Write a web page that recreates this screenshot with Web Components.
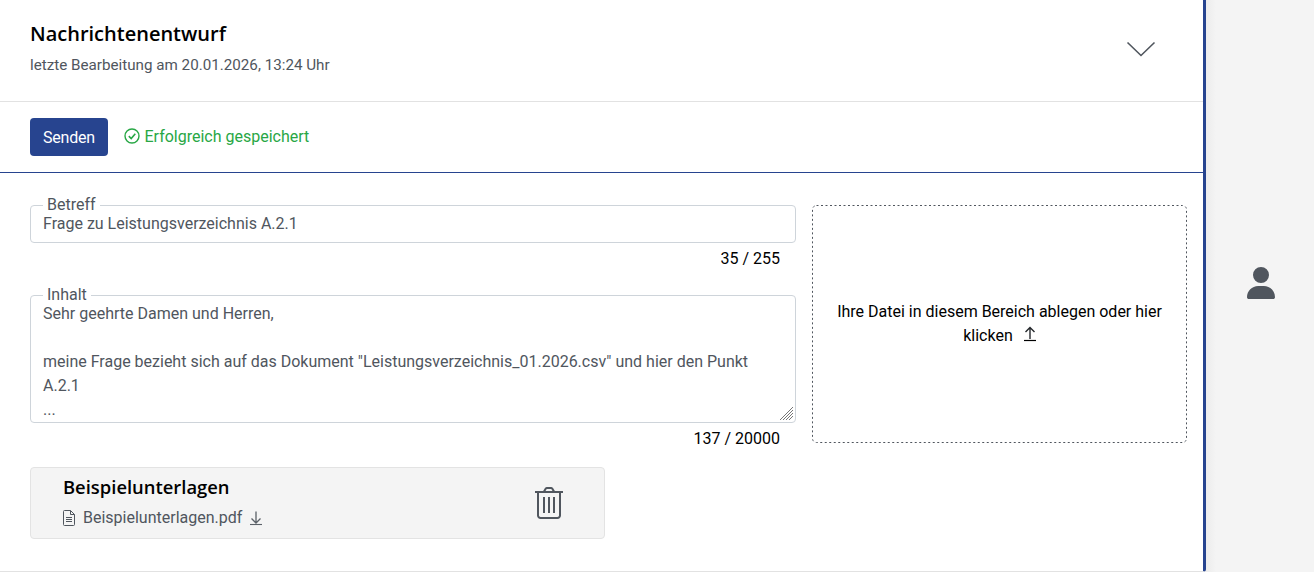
<!DOCTYPE html>
<html lang="de">
<head>
<meta charset="utf-8">
<title>Nachrichtenentwurf</title>
<style>
  html, body { margin: 0; height: 100%; background: #f4f4f4; overflow: hidden; }
  body { font-family: Roboto, "Liberation Sans", sans-serif; font-size: 16px; }
</style>
</head>
<body>
<draft-page></draft-page>

<script>
// kleine helper fuer die icons, alle als inline svg
const ICONS = {
  chevron: `<svg width="30" height="16" viewBox="0 0 30 16" fill="none" stroke="#50565e" stroke-width="1.6"><path d="M1.5 1.5 15 14.5 28.500 1.500"/></svg>`,
  check: `<svg width="16" height="16" viewBox="0 0 16 16" fill="none" stroke="#28a745" stroke-width="1.400"><circle cx="8" cy="8" r="7"/><path d="M4.800 8.200 7.200 10.500 11.300 5.800" stroke-width="1.600"/></svg>`,
  upload: `<svg width="12" height="16" viewBox="0 0 12 16" fill="none" stroke="#24272b" stroke-width="1.400"><path d="M6 13V1.500M1.500 6 6 1.500 10.500 6"/><path d="M0 14.500h12" stroke="#000" stroke-width="1.200"/></svg>`,
  download: `<svg width="12" height="16" viewBox="0 0 12 16" fill="none" stroke="#5b6168" stroke-width="1.300"><path d="M6 1.500V13M1.500 8.500 6 13l4.500-4.500"/><path d="M0 14.500h12" stroke-width="1.100"/></svg>`,
  file: `<svg width="12" height="16" viewBox="0 0 12 16" fill="none" stroke="#50565e" stroke-width="1"><path d="M1.500.500h6l4 4v10a1 1 0 0 1-1 1h-9a1 1 0 0 1-1-1v-13a1 1 0 0 1 1-1z"/><path d="M7.500.500v4h4M3 7.500h6M3 9.500h6M3 11.500h6"/></svg>`,
  trash: `<svg width="28" height="32" viewBox="0 0 28 32" fill="none" stroke="#50565e" stroke-width="2"><path d="M0 5h28M9 4.500 10.500 2a1.500 1.500 0 0 1 1.300-1h4.400a1.500 1.500 0 0 1 1.300 1L19 4.500"/><path d="M3 5v23.500A2.500 2.500 0 0 0 5.500 31h17a2.500 2.500 0 0 0 2.500-2.500V5"/><path d="M9 10v16M14 10v16M19 10v16"/></svg>`,
  user: `<svg width="28" height="32" viewBox="0 0 448 512" fill="#50565e"><path d="M224 256a128 128 0 1 0 0-256 128 128 0 1 0 0 256zm-45.700 48C79.800 304 0 383.800 0 482.300 0 498.700 13.300 512 29.700 512h388.600c16.400 0 29.700-13.300 29.700-29.700C448 383.800 368.200 304 269.700 304h-91.400z"/></svg>`,
  grip: `<svg width="15" height="15" viewBox="0 0 15 15" stroke="#777" stroke-width="1"><path d="M1 14 14 1M4 14 14 4M7 14l7-7M10 14l4-4"/></svg>`
};

class DraftHeader extends HTMLElement {
  constructor() {
    super();
    this.attachShadow({ mode: "open" });
    this.shadowRoot.innerHTML = `
      <style>
        :host { display: flex; justify-content: space-between; height: 101px; box-sizing: content-box;
                padding: 0 47px 0 30px; border-bottom: 1px solid #e2e2e2; align-items: flex-start; }
        h2 { margin: 21px 0 0; font: 600 20px/26px "Open Sans", sans-serif; color: #000; }
        p { margin: 8px 0 0; font-size: 15.200px; line-height: 20px; color: #50565e; }
        .toggle { margin-top: 41px; line-height: 0; }
      </style>
      <div>
        <h2><slot name="title"></slot></h2>
        <p><slot name="sub"></slot></p>
      </div>
      <div class="toggle">${ICONS.chevron}</div>
    `;
  }
}

class SaveBar extends HTMLElement {
  constructor() {
    super();
    this.attachShadow({ mode: "open" });
    this.shadowRoot.innerHTML = `
      <style>
        :host { display: flex; align-items: center; height: 70px; padding-left: 30px; gap: 16px;
                border-bottom: 1px solid #27448f; }
        button { width: 78px; height: 38px; padding: 0; border: 0; border-radius: 4px; background: #27448f;
                 color: #fff; font: 16px Roboto, sans-serif; letter-spacing: -.2px; }
        .ok { display: flex; align-items: center; gap: 4.500px; color: #28a745; font-size: 16px; padding-bottom: 2px; }
        svg { display: block; }
      </style>
      <button><slot name="action"></slot></button>
      <span class="ok">${ICONS.check}<slot></slot></span>
    `;
  }
}

// fieldset + legend gibt den rahmen mit dem label drin
class TextField extends HTMLElement {
  constructor() {
    super();
    this.attachShadow({ mode: "open" });
    this.shadowRoot.innerHTML = `
      <style>
        :host { display: block; }
        fieldset { position: relative; margin: 0; padding: 0 12px; min-width: 0; box-sizing: border-box;
                   border: 1px solid #ced4da; border-radius: 4px; color: #50565e; overflow: hidden;
                   height: var(--field-height, 38px); }
        legend { margin-left: 0; padding: 0 4px; font-size: 16px; line-height: 18px; color: #50565e; }
        .value { line-height: 24px; margin-top: -2px; white-space: pre-wrap; }
        .grip { position: absolute; right: 1px; bottom: 1px; line-height: 0; display: none; }
        :host([resizable]) .grip { display: block; }
        .count { text-align: right; padding-right: 16px; margin-top: 4px; line-height: 24px; color: #000; }
      </style>
      <fieldset>
        <legend></legend>
        <div class="value"><slot></slot></div>
        <div class="grip">${ICONS.grip}</div>
      </fieldset>
      <div class="count"></div>
    `;
  }

  connectedCallback() {
    this.shadowRoot.querySelector("legend").textContent = this.getAttribute("label");
    this.shadowRoot.querySelector(".count").textContent = this.getAttribute("count");
  }
}

class DropZone extends HTMLElement {
  constructor() {
    super();
    this.attachShadow({ mode: "open" });
    // der rahmen ist ein svg, css dashed hat nicht den gleichen abstand
    this.shadowRoot.innerHTML = `
      <style>
        :host { display: flex; position: relative; align-items: center; justify-content: center; box-sizing: border-box;
                height: 238px; padding: 0 17px; text-align: center; line-height: 24px; color: #000; }
        .line { position: absolute; left: 0; top: 0; }
        .up { vertical-align: -1px; margin-left: 11px; }
      </style>
      <svg class="line" width="375" height="238" fill="none"><rect x=".5" y=".5" width="374" height="237" rx="4" stroke="#50565e" stroke-dasharray="2 2.500"/></svg>
      <div><slot></slot><span class="up-wrap"></span></div>
    `;
    this.shadowRoot.querySelector(".up-wrap").innerHTML = ICONS.upload;
    this.shadowRoot.querySelector(".up-wrap svg").classList.add("up");
  }
}

class AttachmentCard extends HTMLElement {
  constructor() {
    super();
    this.attachShadow({ mode: "open" });
    this.shadowRoot.innerHTML = `
      <style>
        :host { display: flex; justify-content: space-between; box-sizing: border-box; width: 575px; height: 72px;
                padding: 0 41px 0 32px; background: #f4f4f4; border: 1px solid #e3e3e3; border-radius: 4px; }
        h3 { margin: 6px 0 0; font: 600 18.400px/25px "Open Sans", sans-serif; color: #000; }
        .file { display: flex; align-items: center; margin-top: 7px; color: #50565e; line-height: 24px; }
        .file svg:first-child { margin-right: 8px; }
        .file svg:last-child { margin-left: 8px; }
        .del { margin-top: 19px; line-height: 0; }
      </style>
      <div>
        <h3><slot name="title"></slot></h3>
        <div class="file">${ICONS.file}<slot name="file"></slot>${ICONS.download}</div>
      </div>
      <div class="del">${ICONS.trash}</div>
    `;
  }
}

class SideRail extends HTMLElement {
  constructor() {
    super();
    this.attachShadow({ mode: "open" });
    this.shadowRoot.innerHTML = `
      <style>
        :host { display: flex; justify-content: center; padding: 267px 0 0 2px; box-sizing: border-box;
                background: linear-gradient(to right, #ececec, #f4f4f4 10px); }
        svg { display: block; }
      </style>
      ${ICONS.user}
    `;
  }
}

class DraftPage extends HTMLElement {
  constructor() {
    super();
    this.attachShadow({ mode: "open" });
    this.shadowRoot.innerHTML = `
      <style>
        :host { display: grid; grid-template-columns: 1206px 1fr; height: 572px; }
        .panel { background: #fff; box-sizing: border-box; height: 572px;
                 border-right: 3px solid #27448f; border-bottom: 1px solid #e2e2e2; border-bottom-right-radius: 3px; }
        .body { display: grid; grid-template-columns: 766px 375px; column-gap: 16px;
                padding: 26px 16px 0 30px; }
        .left { display: flex; flex-direction: column; gap: 24px; }
        .inhalt { --field-height: 137px; margin-top: -9px; }
        .betreff { --field-height: 47px; margin-top: -3px; }
        .right { margin-top: 6px; }
        .full { grid-column: 1 / -1; margin-top: 16px; }
      </style>
      <div class="panel">
        <draft-header>
          <span slot="title">Nachrichtenentwurf</span>
          <span slot="sub">letzte Bearbeitung am 20.01.2026, 13:24 Uhr</span>
        </draft-header>
        <save-bar>
          <span slot="action">Senden</span>
          Erfolgreich gespeichert
        </save-bar>
        <div class="body">
          <div class="left">
            <text-field class="betreff" label="Betreff" count="35 / 255">Frage zu Leistungsverzeichnis A.2.1</text-field>
            <text-field class="inhalt" label="Inhalt" count="137 / 20000" resizable>Sehr geehrte Damen und Herren,

meine Frage bezieht sich auf das Dokument "Leistungsverzeichnis_01.2026.csv" und hier den Punkt A.2.1
...</text-field>
          </div>
          <div class="right">
            <drop-zone>Ihre Datei in diesem Bereich ablegen oder hier klicken</drop-zone>
          </div>
          <div class="full">
            <attachment-card>
              <span slot="title">Beispielunterlagen</span>
              <span slot="file">Beispielunterlagen.pdf</span>
            </attachment-card>
          </div>
        </div>
      </div>
      <side-rail></side-rail>
    `;
  }
}

customElements.define("draft-header", DraftHeader);
customElements.define("save-bar", SaveBar);
customElements.define("text-field", TextField);
customElements.define("drop-zone", DropZone);
customElements.define("attachment-card", AttachmentCard);
customElements.define("side-rail", SideRail);
customElements.define("draft-page", DraftPage);
</script>
</body>
</html>
